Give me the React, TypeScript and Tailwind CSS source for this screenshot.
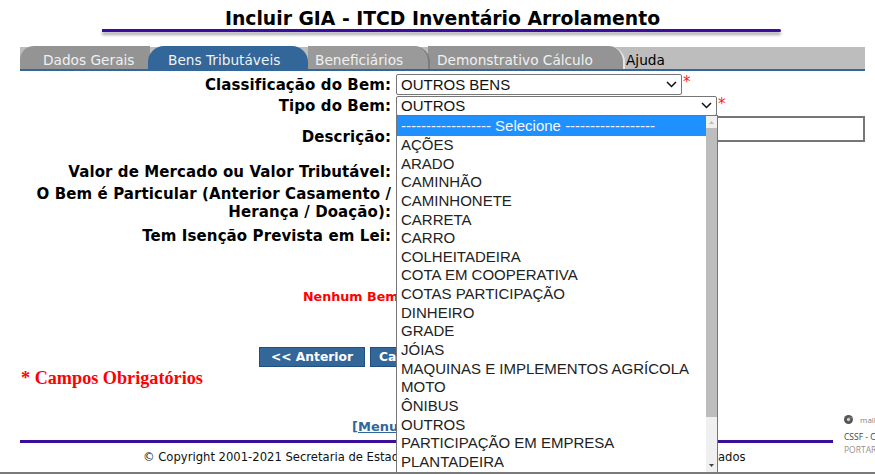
import React from "react";

const sans = "font-['DejaVu_Sans',sans-serif]";
const arial = "font-['Liberation_Sans',Arial,sans-serif]";

const options = [
  "AÇÕES", "ARADO", "CAMINHÃO", "CAMINHONETE", "CARRETA", "CARRO", "COLHEITADEIRA",
  "COTA EM COOPERATIVA", "COTAS PARTICIPAÇÃO", "DINHEIRO", "GRADE", "JÓIAS",
  "MAQUINAS E IMPLEMENTOS AGRÍCOLA", "MOTO", "ÔNIBUS", "OUTROS", "PARTICIPAÇÃO EM EMPRESA", "PLANTADEIRA",
];

function Chevron() {
  return (
    <svg width="11" height="7" viewBox="0 0 11 7" fill="none" stroke="#111" strokeWidth="1.5">
      <path d="M1 1l4.5 4.5L10 1" />
    </svg>
  );
}

function Select({ value, width, className = "" }: { value: string; width: string; className?: string }) {
  return (
    <div className={`${width} h-full flex items-center justify-between border border-[#767676] rounded-[2px] bg-white pl-[4px] pr-[4px] ${arial} text-[15px] leading-none text-[#111] ${className}`}>
      <span>{value}</span>
      <Chevron />
    </div>
  );
}

function Star() {
  return <span className={`${sans} text-[15px] leading-none text-[#ff2020] -ml-[4px] self-start mt-[1px]`}>*</span>;
}

function Label({ children, className = "" }: { children: React.ReactNode; className?: string }) {
  return (
    <div className={`w-[371px] shrink-0 text-right font-bold text-[15px] leading-[18px] text-black tracking-[0.1px] ${className}`}>
      {children}
    </div>
  );
}

function Tab({ label, className = "" }: { label: string; className?: string }) {
  return (
    <div className={`h-[23px] flex items-center pt-[7px] text-[13.7px] leading-none whitespace-nowrap ${className}`}>
      {label}
    </div>
  );
}

export default function App() {
  return (
    <div className={`relative w-[875px] h-[474px] overflow-hidden bg-white ${sans} border-b-2 border-[#7a7a7a]`}>
      <div className="h-[29px] pl-[10px] flex justify-center items-start">
        <span className="font-bold text-[18.8px] leading-[22px] pt-[8px] text-black whitespace-nowrap">Incluir GIA - ITCD Inventário Arrolamento</span>
      </div>
      <div className="w-[679px] ml-[102px] h-[3px] bg-[#3b0d9c] rounded-r-[2px] shadow-[0_3px_3px_rgba(0,0,0,0.35)]" />

      <div className="ml-[20px] mt-[15px] w-[845px] h-[24px] bg-[#bdbdbd] border-b-[2px] border-[#336699] flex items-end">
        <Tab label="Dados Gerais" className="w-[130px] pl-[23px] bg-[#949494] text-[#f0f0f0] rounded-tl-[14px]" />
        <Tab label="Bens Tributáveis" className="relative z-10 w-[160px] -ml-[2px] pl-[20px] bg-[#336699] text-[#f2f2f2] rounded-t-[16px]" />
        <Tab label="Beneficiários" className="relative z-[5] w-[122px] pl-[7px] bg-[#9a9a9a] text-[#f0f0f0] rounded-tr-[16px] border-r-2 border-[#7c7c7c]" />
        <Tab label="Demonstrativo Cálculo" className="w-[197px] -ml-[2px] pl-[9px] bg-[#949494] text-[#f0f0f0] rounded-tr-[16px] border-r-2 border-[#e6e6e6]" />
        <Tab label="Ajuda" className="pl-[1px] text-black" />
      </div>

      <div className="ml-[20px] w-[845px] pt-[3px]">
        <div className="flex items-center h-[21px] gap-[5px]">
          <Label>Classificação do Bem:</Label>
          <Select value="OUTROS BENS" width="w-[286px]" />
          <Star />
        </div>
        <div className="flex items-center h-[20px] mt-[1px] gap-[5px]">
          <Label>Tipo do Bem:</Label>
          <Select value="OUTROS" width="w-[321px]" className="pb-[2px]" />
          <Star />
        </div>
        <div className="flex items-start h-[26px] gap-[5px]">
          <Label className="mt-[12px]">Descrição:</Label>
          <div className="flex-1 h-full border-[2px] border-[#767676] bg-white" />
        </div>
        <div className="flex items-center h-[18px] mt-[21px]">
          <Label>Valor de Mercado ou Valor Tributável:</Label>
        </div>
        <div className="mt-[4px] flex">
          <Label>O Bem é Particular (Anterior Casamento / Herança / Doação):</Label>
        </div>
        <div className="mt-[6px] flex">
          <Label>Tem Isenção Prevista em Lei:</Label>
        </div>
      </div>

      <p className="mt-[43px] pl-[303px] text-[12.7px] leading-[18px] font-bold text-[#ff0000] whitespace-nowrap">Nenhum Bem Cadastrado</p>

      <div className="mt-[41px] pl-[259px] flex gap-[5px] h-[20px]">
        <div className="w-[106px] flex items-center justify-center bg-[#336699] border border-[#1f4f80] text-white font-bold text-[12.3px]">&lt;&lt; Anterior</div>
        <div className="w-[106px] flex items-center pl-[8px] bg-[#336699] border border-[#1f4f80] text-white font-bold text-[12.3px]">Calcular</div>
      </div>

      <p className="ml-[21px] mt-[1px] font-['Liberation_Serif',serif] font-bold text-[18.2px] leading-[20px] text-[#ff0000]">* Campos Obrigatórios</p>

      <div className="flex">
        <div className="ml-[20px] w-[813px]">
          <p className="mt-[31px] pl-[332px] text-[13px] leading-[16px] font-bold text-[#336699] underline whitespace-nowrap">[Menu Principal]</p>
          <div className="mt-[5px] h-[3px] bg-[#3b0d9c]" />
          <p className="mt-[6px] pl-[123px] text-[11.6px] leading-[16px] text-[#111] whitespace-nowrap">© Copyright 2001-2021 Secretaria de Estado de Fazenda de Mato Grosso. Todos os Direitos Reservados</p>
        </div>
        <div className={`ml-[11px] mt-[25px] w-[31px] shrink-0 font-['Open_Sans',sans-serif] text-[8.5px] leading-[13px] whitespace-nowrap`}>
          <div className="flex items-center gap-[7px] h-[13px] mb-[4px] text-[8px] text-[#8a7f80]">
            <svg width="9" height="9" viewBox="0 0 9 9" className="shrink-0">
              <circle cx="4.5" cy="4.5" r="4.5" fill="#555" />
              <circle cx="4.5" cy="4.5" r="1.7" fill="#ccc" />
              <path d="M4.5 2.8h4" stroke="#999" strokeWidth="0.7" />
            </svg>
            <span>mail</span>
          </div>
          <div className="text-[#444]">CSSF - C</div>
          <div className="text-[#9a8f90]">PORTAR</div>
        </div>
      </div>

      <div className={`absolute left-[396px] top-[115px] w-[322px] h-[359px] bg-white border border-[#767676] ${arial} text-[15px] text-[#222] flex`}>
        <div className="flex-1 min-w-0">
          <div className="h-[20px] bg-[#1e90ff] text-[#f4f8ff] pl-[4px] leading-[20px] whitespace-nowrap">------------------ Selecione ------------------</div>
          {options.map((o) => (
            <div key={o} className="h-[18.65px] leading-[18.65px] pl-[4px] whitespace-nowrap">{o}</div>
          ))}
        </div>
        <div className="w-[11px] shrink-0 bg-[#f0f0f0] flex flex-col items-center">
          <svg width="7" height="12" viewBox="0 0 7 12" className="shrink-0"><path d="M1 8l2.5-3L6 8z" fill="#bbb" /></svg>
          <div className="w-full h-[289px] bg-[#bdbdbd]" />
          <div className="flex-1" />
          <svg width="7" height="14" viewBox="0 0 7 14" className="shrink-0"><path d="M1 5l2.5 3L6 5z" fill="#444" /></svg>
        </div>
      </div>
    </div>
  );
}
